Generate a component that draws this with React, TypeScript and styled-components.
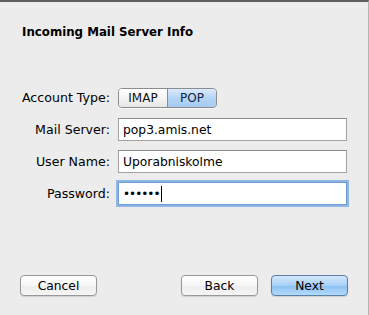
import React from "react"
import styled, { createGlobalStyle } from "styled-components"

const GlobalStyle = createGlobalStyle`
  html, body {
    margin: 0;
    padding: 0;
    background: #ececec;
  }
  body {
    font-family: "Lucida Grande", "DejaVu Sans", sans-serif;
  }
`

const Window = styled.div`
  box-sizing: border-box;
  width: 369px;
  height: 315px;
  background: #ececec;
  border-top: 2px solid #5e5e5e;
  border-right: 1px solid #b4b4b4;
  display: flex;
  flex-direction: column;
  color: #000;
  font-size: 12px;
`

const Title = styled.h1`
  margin: 0;
  padding: 22px 0 0 22px;
  font-size: 11.8px;
  line-height: 16px;
  font-weight: bold;
`

const Form = styled.div`
  display: grid;
  grid-template-columns: 110px 229px;
  grid-auto-rows: 23px;
  column-gap: 8px;
  row-gap: 9px;
  margin-top: 46px;
  align-items: center;
`

const Label = styled.label`
  text-align: right;
  line-height: 23px;
  font-size: 12.6px;
  white-space: nowrap;
`

const Segmented = styled.div`
  display: flex;
  width: 99px;
  height: 20px;
  box-sizing: border-box;
  border: 1px solid #8c8c8c;
  border-radius: 4px;
  overflow: hidden;
  box-shadow: 0 1px 0 rgba(255, 255, 255, 0.6);
`

const Segment = styled.div<{ $selected?: boolean }>`
  flex: 1;
  display: flex;
  align-items: center;
  justify-content: center;
  font-size: 12px;
  color: ${(p) => (p.$selected ? "#10243f" : "#111")};
  background: ${(p) =>
    p.$selected
      ? "linear-gradient(#d9eafc, #b3d3f5 55%, #a6cbf2)"
      : "linear-gradient(#ffffff, #f3f3f3 55%, #e6e6e6)"};
  & + & {
    border-left: 1px solid #8c8c8c;
  }
`

const Field = styled.div<{ $focused?: boolean }>`
  box-sizing: border-box;
  height: 23px;
  background: #fff;
  border: 1px solid ${(p) => (p.$focused ? "#6f9bd3" : "#a3a3a3")};
  border-top-color: ${(p) => (p.$focused ? "#6f9bd3" : "#8a8a8a")};
  box-shadow: ${(p) => (p.$focused ? "0 0 0 2px #8fb6e4" : "none")};
  display: flex;
  align-items: center;
  padding-left: 4px;
  font-size: 12.3px;
  white-space: nowrap;
`

const Dots = styled.span`
  font-size: 12px;
  letter-spacing: -1px;
`

const Caret = styled.span`
  display: inline-block;
  width: 1px;
  height: 16px;
  margin-left: 2px;
  background: #000;
`

const Footer = styled.div`
  margin-top: auto;
  display: flex;
  align-items: center;
  padding: 0 20px 19px 20px;
  gap: 13px;
`

const Button = styled.button<{ $primary?: boolean }>`
  box-sizing: border-box;
  width: 77px;
  height: 21px;
  padding: 0;
  font-family: inherit;
  font-size: 12.3px;
  color: #000;
  border-radius: 4px;
  border: 1px solid ${(p) => (p.$primary ? "#5b7ea6" : "#989898")};
  background: ${(p) =>
    p.$primary
      ? "linear-gradient(#d4e8fc, #a6cff6 50%, #8cc1f2 52%, #b2dafb)"
      : "linear-gradient(#ffffff, #f6f6f6 50%, #ededed 52%, #f5f5f5)"};
  box-shadow: 0 1px 1px rgba(0, 0, 0, 0.12);
`

const Spacer = styled.div`
  flex: 1;
`

export default function App() {
  return (
    <>
      <GlobalStyle />
      <Window>
        <Title>Incoming Mail Server Info</Title>
        <Form>
          <Label>Account Type:</Label>
          <Segmented>
            <Segment>IMAP</Segment>
            <Segment $selected>POP</Segment>
          </Segmented>
          <Label>Mail Server:</Label>
          <Field>pop3.amis.net</Field>
          <Label>User Name:</Label>
          <Field>Uporabniskolme</Field>
          <Label>Password:</Label>
          <Field $focused>
            <Dots>••••••</Dots>
            <Caret />
          </Field>
        </Form>
        <Footer>
          <Button>Cancel</Button>
          <Spacer />
          <Button>Back</Button>
          <Button $primary>Next</Button>
        </Footer>
      </Window>
    </>
  )
}
